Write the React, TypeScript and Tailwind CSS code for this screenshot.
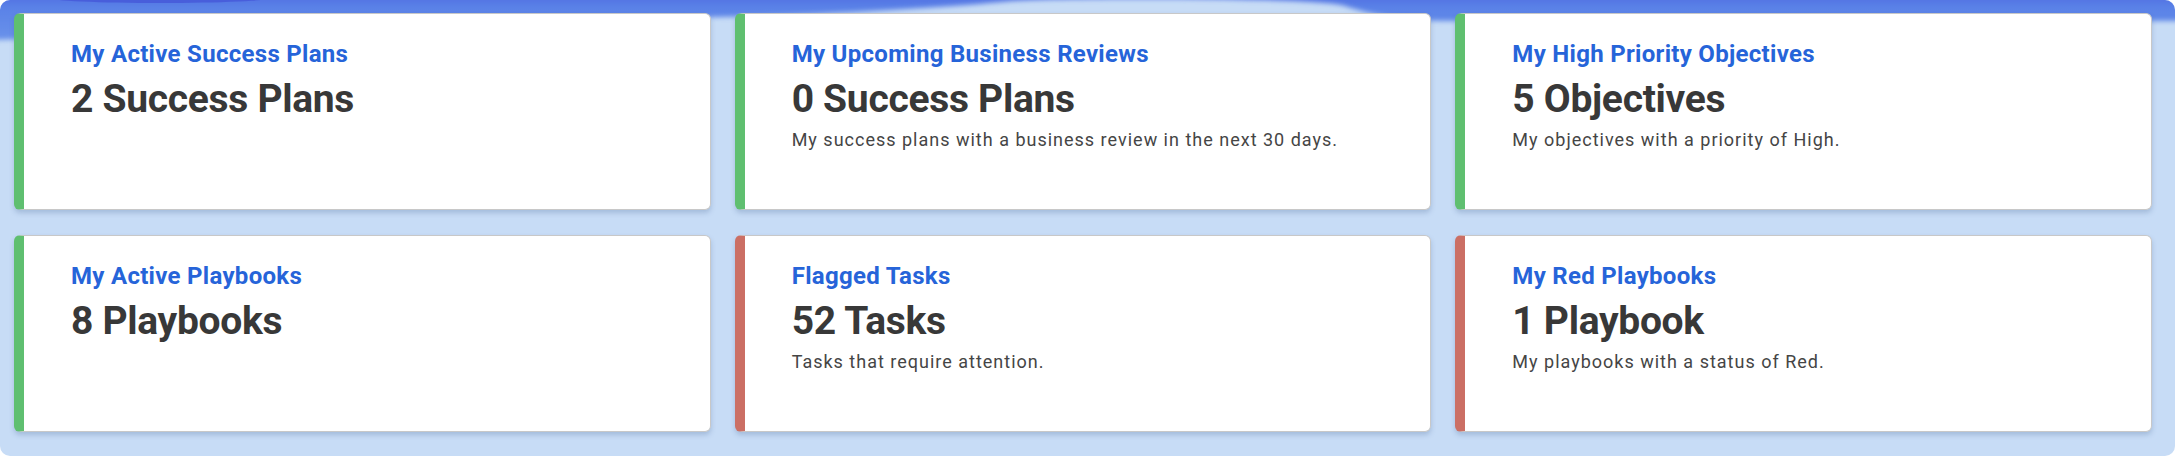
import React from "react";

type Card = {
  title: string;
  value: string;
  desc?: string;
  tone: "green" | "red";
};

const cards: Card[] = [
  { title: "My Active Success Plans", value: "2 Success Plans", tone: "green" },
  {
    title: "My Upcoming Business Reviews",
    value: "0 Success Plans",
    desc: "My success plans with a business review in the next 30 days.",
    tone: "green",
  },
  {
    title: "My High Priority Objectives",
    value: "5 Objectives",
    desc: "My objectives with a priority of High.",
    tone: "green",
  },
  { title: "My Active Playbooks", value: "8 Playbooks", tone: "green" },
  { title: "Flagged Tasks", value: "52 Tasks", desc: "Tasks that require attention.", tone: "red" },
  {
    title: "My Red Playbooks",
    value: "1 Playbook",
    desc: "My playbooks with a status of Red.",
    tone: "red",
  },
];

function Wave() {
  return (
    <svg
      className="absolute left-0 top-0"
      width="2175"
      height="70"
      viewBox="0 0 2175 70"
      aria-hidden="true"
    >
      <defs>
        <linearGradient id="wg" x1="0" y1="0" x2="0" y2="1">
          <stop offset="0" stopColor="#4d66df" />
          <stop offset="0.35" stopColor="#5a82e7" />
          <stop offset="1" stopColor="#6a92ea" />
        </linearGradient>
        <filter id="wb" x="-5%" y="-50%" width="110%" height="200%">
          <feGaussianBlur stdDeviation="2.5" />
        </filter>
      </defs>
      <path
        filter="url(#wb)"
        fill="url(#wg)"
        d="M-10 -10 L2185 -10 L2185 21 L1450 21 C1405 21 1372 15 1345 6 C1320 -3 1060 -3 1012 1 C950 7 850 14 720 17 C500 22 220 33 -10 40 Z"
      />
      <ellipse cx="160" cy="-2" rx="110" ry="5" fill="#4557d8" opacity="0.8" />
    </svg>
  );
}

const font = { fontFamily: "Roboto, 'Liberation Sans', sans-serif" };

function StatCard({ card }: { card: Card }) {
  const strip = card.tone === "green" ? "border-l-[#5fbf70]" : "border-l-[#cb6f64]";
  return (
    <div
      className={`h-[197px] rounded-[6px] border border-[#c8c8c8] border-l-[10px] ${strip} bg-white pl-[47px] pt-[26px] shadow-[0_3px_5px_rgba(60,90,140,0.25)]`}
    >
      <div
        className="text-[24px] font-bold leading-[28px] tracking-[0.3px] text-[#2664d9]"
        style={font}
      >
        {card.title}
      </div>
      <div
        className="mt-[9px] text-[39px] font-bold leading-[44px] tracking-[-0.3px] text-[#383838]"
        style={font}
      >
        {card.value}
      </div>
      {card.desc && (
        <div
          className="mt-[8px] text-[18px] leading-[22px] tracking-[1px] text-[#454545]"
          style={font}
        >
          {card.desc}
        </div>
      )}
    </div>
  );
}

export default function App() {
  return (
    <div className="relative h-[456px] w-[2175px] overflow-hidden rounded-[10px] bg-[#c7dcf6]">
      <Wave />
      <div className="relative grid grid-cols-3 gap-x-[24px] gap-y-[25px] pb-[25px] pl-[14px] pr-[23px] pt-[13px]">
        {cards.map((c) => (
          <StatCard key={c.title} card={c} />
        ))}
      </div>
    </div>
  );
}
